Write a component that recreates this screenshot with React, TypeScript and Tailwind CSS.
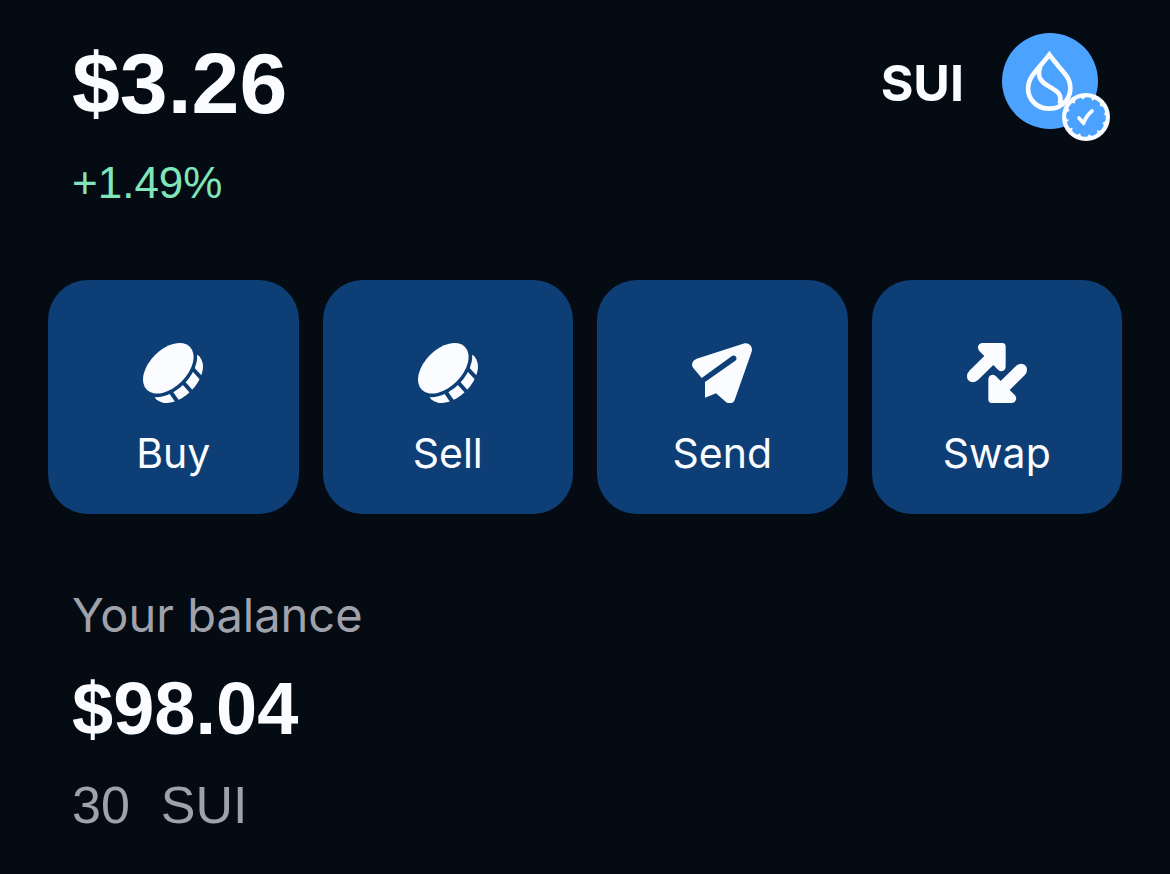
import type { ReactNode } from "react";

const CoinIcon = () => {
  return (
    <svg viewBox="0 0 60 60" className="size-[60px]" aria-hidden="true">
      <ellipse
        cx="34.7"
        cy="34.7"
        rx="30.4"
        ry="18.8"
        transform="rotate(-45 34.7 34.7)"
        fill="#fafcff"
      />
      <path
        d="M27 48 35 59.5M38 37 51 51.5M48.5 24.5 60 37"
        stroke="#0d3f76"
        strokeWidth="4"
      />
      <ellipse
        cx="25.3"
        cy="25.3"
        rx="34.2"
        ry="22.3"
        transform="rotate(-45 25.3 25.3)"
        fill="#0d3f76"
      />
      <ellipse
        cx="25.3"
        cy="25.3"
        rx="30.4"
        ry="18.8"
        transform="rotate(-45 25.3 25.3)"
        fill="#fafcff"
      />
    </svg>
  );
};

const SendIcon = () => {
  return (
    <svg
      viewBox="36 38 180 180"
      className="size-[60px]"
      fill="#fafcff"
      aria-hidden="true"
    >
      <path d="M194 39 50 85Q36 91 36 103 36 108 40 113L65 143 156 77Q163 73 168 79 172 86 166 91L75 155V199Q75 203 79 201L108 189 137 214Q142 219 149 219 160 219 164 209L215 64Q218 53 211 45 204 37 194 39Z" />
    </svg>
  );
};

const SwapIcon = () => {
  return (
    <svg
      viewBox="36 38 180 180"
      className="size-[60px]"
      fill="#fafcff"
      aria-hidden="true"
    >
      <path
        id="swap-arrow"
        d="M80 38H142Q152 38 152 49V108Q152 120 142 122 135 124 129 118L115 104 69 149Q61 156 52 156 36 153 36 138 36 129 43 121L88 77 72 61Q67 55 69 48 72 39 80 38Z"
      />
      <use href="#swap-arrow" transform="rotate(180 126 128)" />
    </svg>
  );
};

const TokenLogo = () => {
  return (
    <svg
      viewBox="36 39 324 324"
      className="size-[108px]"
      role="img"
      aria-label="SUI, verified"
    >
      <circle cx="180" cy="183" r="144" fill="#4ca2ff" />
      <g fill="none" stroke="#fafcff" strokeWidth="14" strokeLinejoin="miter">
        <path d="M178 104C160 128 141 147 127 167 111 190 110 218 125 240 150 274 203 275 229 241 245 219 245 190 229 167 214 147 195 128 178 104Z" />
        <path d="M151 141C139 172 155 187 175 198 205 215 217 224 209 252" />
      </g>
      <circle cx="288" cy="291" r="72" fill="#fafcff" />
      <circle cx="288" cy="291" r="53" fill="#4ca2ff" />
      <circle
        cx="288"
        cy="291"
        r="51"
        fill="none"
        stroke="#4ca2ff"
        strokeWidth="17"
        strokeLinecap="round"
        strokeDasharray="8 18.7"
      />
      <path
        d="M267 294 281 310Q287 289 306 273"
        fill="none"
        stroke="#fafcff"
        strokeWidth="11"
        strokeLinecap="round"
        strokeLinejoin="round"
      />
    </svg>
  );
};

const actions: { name: string; icon: ReactNode }[] = [
  { name: "Buy", icon: <CoinIcon /> },
  { name: "Sell", icon: <CoinIcon /> },
  { name: "Send", icon: <SendIcon /> },
  { name: "Swap", icon: <SwapIcon /> },
];

export default function App() {
  return (
    <main className="min-h-screen bg-[#040b13] px-12 pt-[33px] pb-9 font-['Inter',sans-serif] text-[#fafcff]">
      <header className="flex items-start justify-between pr-3 pl-6">
        <div>
          <h1 className="font-['Liberation_Sans',sans-serif] text-[86px] leading-[100px] font-bold">
            $3.26
          </h1>
          <p className="mt-[22px] font-['Liberation_Sans',sans-serif] text-[44px] leading-[56px] text-[#80e5b8]">
            +1.49%
          </p>
        </div>
        <div className="flex items-start gap-[38px]">
          <span className="text-[50px] leading-[100px] font-bold">SUI</span>
          <TokenLogo />
        </div>
      </header>

      <nav className="mt-[69px] grid grid-cols-4 gap-6" aria-label="Actions">
        {actions.map((action) => (
          <button
            key={action.name}
            type="button"
            className="flex flex-col items-center rounded-[40px] bg-[#0d3f76] pt-[63px] pb-[37px]"
          >
            {action.icon}
            <span className="mt-[26px] text-[41px] leading-[48px]">
              {action.name}
            </span>
          </button>
        ))}
      </nav>

      <section className="mt-[73px] px-6">
        <h2 className="text-[47px] leading-[56px] text-[#a0a2ab]">
          Your balance
        </h2>
        <p className="mt-[26px] font-['Liberation_Sans',sans-serif] text-[74px] leading-[80px] font-bold">
          $98.04
        </p>
        <p className="mt-6 flex gap-[31px] font-['Liberation_Sans',sans-serif] text-[52px] leading-[64px] text-[#a0a2ab]">
          <span>30</span>
          <span>SUI</span>
        </p>
      </section>
    </main>
  );
}
